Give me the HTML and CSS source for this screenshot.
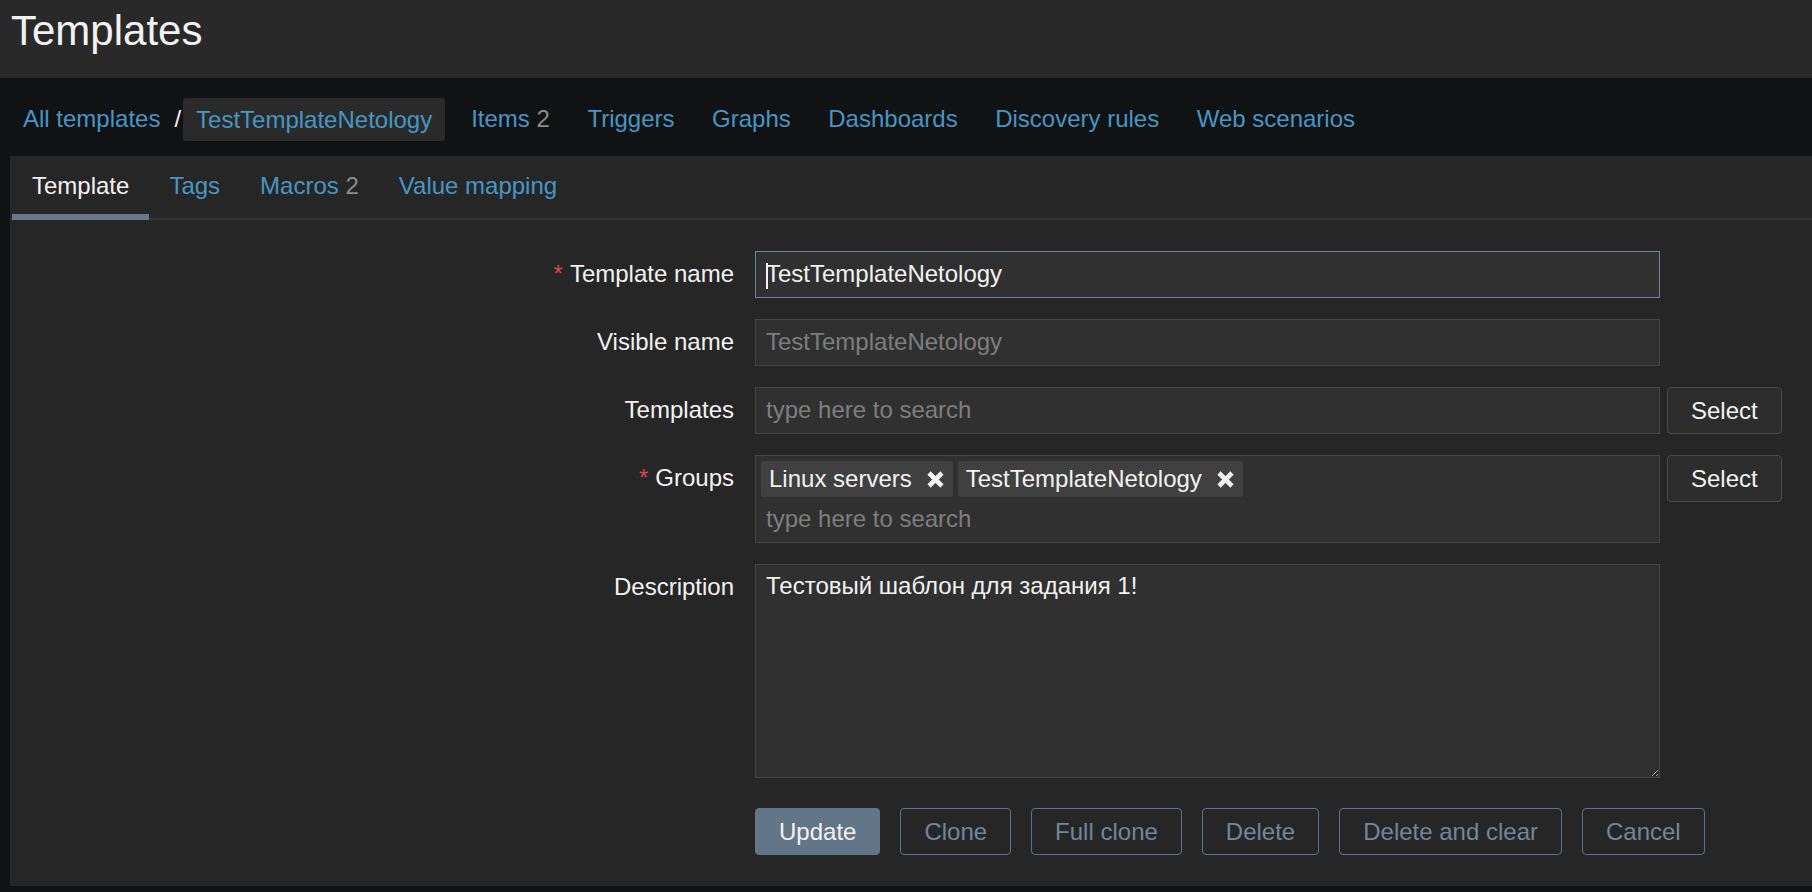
FILE: index.html
```html
<!DOCTYPE html>
<html lang="en">
<head>
<meta charset="utf-8">
<title>Templates</title>
<link rel="stylesheet" href="styles.css">
</head>
<body>
<header class="page-header">
  <h1 class="page-title">Templates</h1>
</header>
<nav class="object-nav">
  <ul class="breadcrumbs">
    <li><a class="link" href="#">All templates</a></li>
    <li class="crumb-sep">/</li>
    <li class="crumb-current"><a class="link" href="#">TestTemplateNetology</a></li>
  </ul>
  <ul class="object-links">
    <li><a class="link" href="#">Items</a> <span class="count">2</span></li>
    <li><a class="link" href="#">Triggers</a></li>
    <li><a class="link" href="#">Graphs</a></li>
    <li><a class="link" href="#">Dashboards</a></li>
    <li><a class="link" href="#">Discovery rules</a></li>
    <li><a class="link" href="#">Web scenarios</a></li>
  </ul>
</nav>
<main class="panel">
  <ul class="tabs">
    <li class="tab tab-active">Template</li>
    <li class="tab"><a class="link" href="#">Tags</a></li>
    <li class="tab"><a class="link" href="#">Macros</a> <span class="count">2</span></li>
    <li class="tab"><a class="link" href="#">Value mapping</a></li>
  </ul>
  <form class="form-grid">
    <label class="form-label required">Template name</label>
    <div class="field">
      <div class="text-box focused"><span class="caret"></span>TestTemplateNetology</div>
    </div>

    <label class="form-label">Visible name</label>
    <div class="field">
      <div class="text-box placeholder">TestTemplateNetology</div>
    </div>

    <label class="form-label">Templates</label>
    <div class="field">
      <div class="text-box placeholder">type here to search</div>
      <button type="button" class="btn-select">Select</button>
    </div>

    <label class="form-label required">Groups</label>
    <div class="field">
      <div class="multiselect">
        <ul class="ms-tags">
          <li class="ms-tag">Linux servers<svg class="ms-remove" width="19" height="19" viewBox="0 0 19 19"><path d="M3 3L16 16M16 3L3 16" stroke="#f2f2f2" stroke-width="4.6"/></svg></li>
          <li class="ms-tag">TestTemplateNetology<svg class="ms-remove" width="19" height="19" viewBox="0 0 19 19"><path d="M3 3L16 16M16 3L3 16" stroke="#f2f2f2" stroke-width="4.6"/></svg></li>
        </ul>
        <div class="ms-input">type here to search</div>
      </div>
      <button type="button" class="btn-select">Select</button>
    </div>

    <label class="form-label">Description</label>
    <div class="field">
      <textarea class="textarea">Тестовый шаблон для задания 1!</textarea>
    </div>

    <div class="form-actions">
      <button type="button" class="btn btn-primary">Update</button>
      <button type="button" class="btn">Clone</button>
      <button type="button" class="btn">Full clone</button>
      <button type="button" class="btn">Delete</button>
      <button type="button" class="btn">Delete and clear</button>
      <button type="button" class="btn">Cancel</button>
    </div>
  </form>
</main>
</body>
</html>
```

FILE: styles.css
```css
* { box-sizing: border-box; }
html, body { margin: 0; padding: 0; }
body {
  background: #111214;
  color: #f2f2f2;
  font-family: "Liberation Sans", Arial, Helvetica, sans-serif;
  font-size: 24px;
  width: 1812px;
  height: 892px;
  overflow: hidden;
}
ul { list-style: none; margin: 0; padding: 0; }
.link { color: #4796c4; text-decoration: none; }
.count { color: #8c8c8c; }

.page-header {
  height: 78px;
  background: #292929;
  padding: 7px 0 0 11px;
}
.page-title {
  margin: 0;
  font-size: 42px;
  line-height: 47px;
  font-weight: normal;
  color: #f2f2f2;
}

.object-nav {
  height: 78px;
  padding: 4px 0 0 23px;
  display: flex;
  align-items: center;
}
.breadcrumbs { display: flex; align-items: center; }
.crumb-sep { margin: 0 2px 0 14px; color: #f2f2f2; }
.crumb-current {
  height: 43px;
  line-height: 43px;
  padding: 0 13px;
  background: #2a2a2a;
  border-radius: 3px;
}
.object-links { display: flex; gap: 37.5px; margin-left: 26px; }

.panel {
  margin: 0 0 6px 10px;
  background: #262626;
  height: 730px;
}
.tabs {
  display: flex;
  padding-left: 2px;
  border-bottom: 2px solid #333333;
}
.tab {
  height: 64px;
  margin-bottom: -2px;
  padding: 3px 20px 0;
  line-height: 54px;
  border-bottom: 6px solid transparent;
}
.tab-active { border-bottom-color: #66798a; color: #f2f2f2; }

.form-grid {
  display: grid;
  grid-template-columns: 724px 1fr;
  column-gap: 21px;
  row-gap: 21px;
  padding-top: 31px;
}
.form-label {
  text-align: right;
  line-height: 46px;
  white-space: nowrap;
}
.required::before {
  content: "*";
  color: #d8484a;
  margin-right: 7px;
}
.field {
  display: flex;
  gap: 7px;
  align-items: flex-start;
}
.text-box {
  width: 905px;
  flex: none;
  height: 47px;
  line-height: 44px;
  padding: 0 10px;
  background: #303030;
  border: 1px solid #454545;
  white-space: nowrap;
}
.text-box.focused { border-color: #6d8396; }
.placeholder { color: #7e7e7e; }
.caret {
  display: inline-block;
  width: 2px;
  height: 26px;
  background: #f2f2f2;
  vertical-align: middle;
  margin-right: -2px;
}
.btn-select {
  height: 47px;
  padding: 0 23px;
  background: #2d2d2d;
  border: 1px solid #4a4a4a;
  border-radius: 4px;
  color: #f2f2f2;
  font: inherit;
}
.multiselect {
  width: 905px;
  flex: none;
  padding: 5px;
  background: #303030;
  border: 1px solid #454545;
}
.ms-tags { display: flex; gap: 5px; margin-bottom: 4px; }
.ms-tag {
  display: inline-flex;
  align-items: center;
  height: 36px;
  padding: 0 8px;
  background: #404040;
  border-radius: 3px;
  gap: 14px;
  white-space: nowrap;
}
.ms-remove { display: block; }
.ms-input {
  height: 36px;
  line-height: 35px;
  padding-left: 5px;
  color: #7e7e7e;
}
.textarea {
  display: block;
  width: 905px;
  height: 214px;
  padding: 7px 10px;
  margin: 0;
  background: #303030;
  border: 1px solid #454545;
  border-radius: 0;
  color: #f2f2f2;
  font: inherit;
  line-height: 27px;
  resize: both;
  color-scheme: dark;
  outline: none;
}
.form-actions {
  grid-column: 2;
  display: flex;
  gap: 20px;
  padding-top: 9px;
}
.btn {
  height: 47px;
  padding: 0 23px;
  border-radius: 4px;
  font: inherit;
  border: 1px solid #607384;
  background: transparent;
  color: #71879a;
}
.btn-primary {
  background: #637687;
  border-color: #637687;
  color: #f2f2f2;
}
```
